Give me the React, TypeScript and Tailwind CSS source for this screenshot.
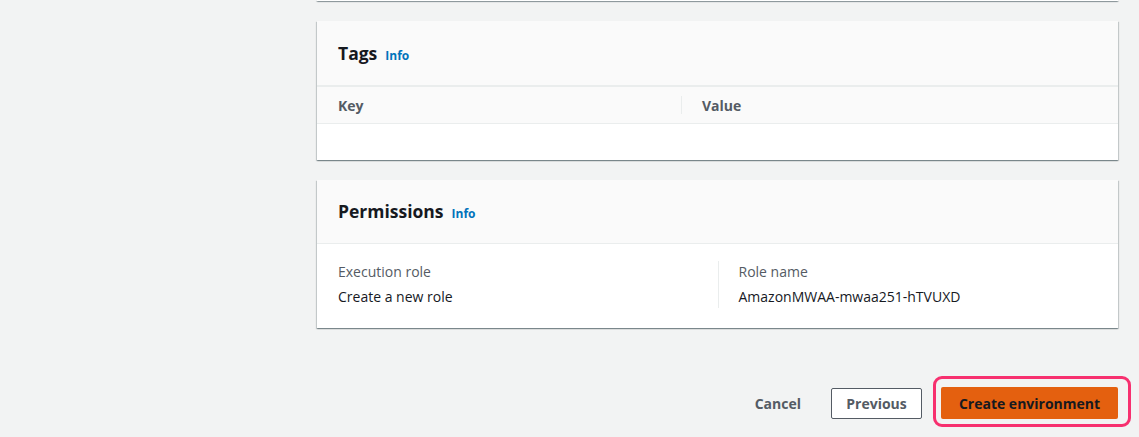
const cardShadow =
  "shadow-[0_1px_1px_0_rgba(0,28,36,0.3),1px_1px_1px_0_rgba(0,28,36,0.15),-1px_1px_1px_0_rgba(0,28,36,0.15)]";

function CardTitle({ children }: { children: string }) {
  return (
    <div className="flex items-baseline">
      <h2 className="text-[17.5px] font-bold">{children}</h2>
      <span className="ml-[8px] text-[12px] font-bold text-[#0073bb]">Info</span>
    </div>
  );
}

export default function App() {
  return (
    <div
      className="min-h-[437px] w-[1139px] bg-[#f2f3f3] pl-[317px] pr-[21px] text-[14px] text-[#16191f]"
      style={{ fontFamily: '"Open Sans", "Noto Sans", Arial, sans-serif' }}
    >
      {/* tail of the card above */}
      <div className={`h-px bg-white ${cardShadow}`} />

      {/* Tags */}
      <section className={`mt-[20px] bg-white ${cardShadow}`}>
        <div className="flex h-[65px] items-center border-b border-[#eaeded] bg-[#fafafa] px-[21px]">
          <CardTitle>Tags</CardTitle>
        </div>
        <div className="flex h-[38px] items-center border-t border-b border-[#eaeded] bg-[#fafafa] font-bold text-[#545b64]">
          <div className="w-[364px] pl-[21px]">Key</div>
          <div className="flex h-[18px] items-center border-l border-[#eaeded] pl-[20px]">Value</div>
        </div>
        <div className="h-[36px]" />
      </section>

      {/* Permissions */}
      <section className={`mt-[20px] bg-white ${cardShadow}`}>
        <div className="flex h-[64px] items-center border-b border-[#eaeded] bg-[#fafafa] px-[21px]">
          <CardTitle>Permissions</CardTitle>
        </div>
        <div className="grid grid-cols-2 px-[21px] pt-[17px] pb-[20px]">
          <div className="pr-5">
            <div className="leading-[22px] text-[#545b64]">Execution role</div>
            <div className="mt-[3px] leading-[22px]">Create a new role</div>
          </div>
          <div className="border-l border-[#eaeded] pl-[20px]">
            <div className="leading-[22px] text-[#545b64]">Role name</div>
            <div className="mt-[3px] leading-[22px]">AmazonMWAA-mwaa251-hTVUXD</div>
          </div>
        </div>
      </section>

      {/* Actions */}
      <div className="mt-[59px] flex items-center justify-end">
        <button className="px-[8px] font-bold text-[#545b64]">Cancel</button>
        <button className="ml-[22px] h-[31px] w-[91px] rounded-[2px] border border-[#545b64] bg-white font-bold text-[#545b64]">
          Previous
        </button>
        <div className="relative ml-[19px]">
          <button className="h-[32px] w-[177px] rounded-[2px] bg-[#e4600f] font-bold text-[#16191f]">
            Create environment
          </button>
          <span className="pointer-events-none absolute -top-[11px] -bottom-[8px] -left-[8px] -right-[13px] rounded-[9px] border-[3px] border-[#f7306f]" />
        </div>
      </div>
    </div>
  );
}
